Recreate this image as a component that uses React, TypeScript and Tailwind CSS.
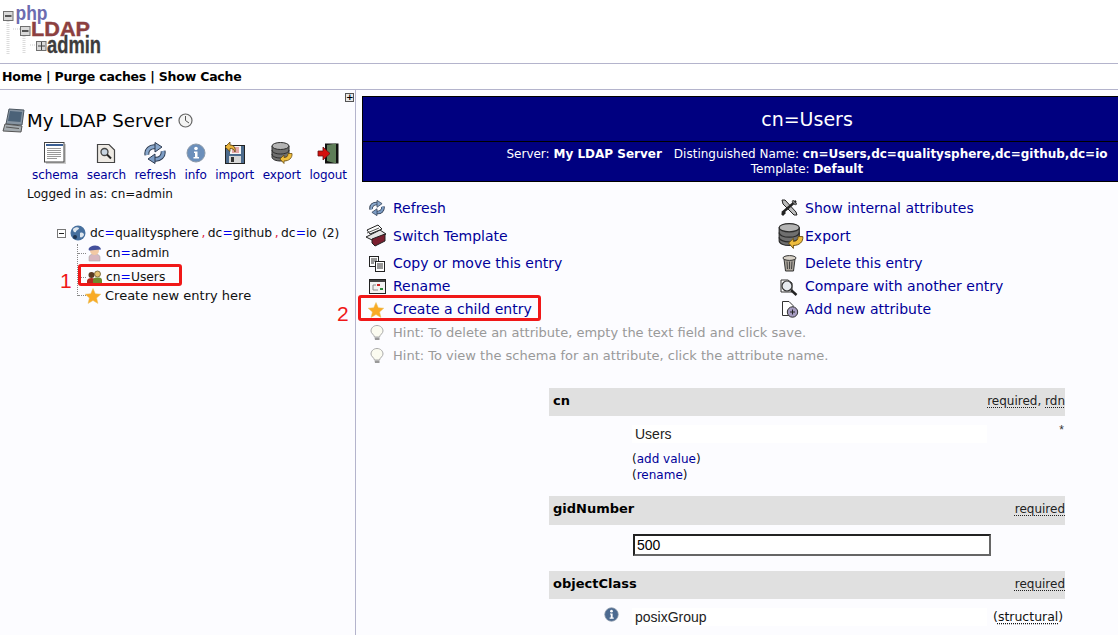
import React, { ReactNode } from 'react';

type IconProps = { size?: number; className?: string };

const Logo = () => (
  <svg width="106" height="60" viewBox="0 0 106 60" className="block">
    <g stroke="#dcdcdc" strokeDasharray="1 1" fill="none" strokeWidth="3">
      <path d="M8 20V53M24 35V53" />
    </g>
    <path d="M13 28H20M30 44H36" stroke="#ccc" strokeDasharray="1 1" />
    <g fill="#dadada" stroke="#707070">
      <rect x="3.5" y="10.5" width="9.5" height="9" />
      <rect x="20.5" y="25.5" width="9.5" height="9" />
      <rect x="36.5" y="40.5" width="9.5" height="9" />
    </g>
    <path d="M5 15H11.5M22 30H28.5" stroke="#555" strokeWidth="2" />
    <path d="M38 45H45M41.5 41V49" stroke="#444" />
    <g fontFamily="'Liberation Sans',sans-serif" fontWeight="700">
      <text x="15.5" y="19" fontSize="21" fill="#6c6cb0" textLength="32" lengthAdjust="spacingAndGlyphs">php</text>
      <text x="31" y="35" fontSize="21" fill="#8c4040" stroke="#8c4040" strokeWidth="0.4" textLength="59" lengthAdjust="spacingAndGlyphs">LDAP</text>
      <text x="47" y="52" fontSize="23" fill="#3c3c3c" stroke="#3c3c3c" strokeWidth="0.3" textLength="54" lengthAdjust="spacingAndGlyphs">admin</text>
    </g>
  </svg>
);

const ServerIcon = () => (
  <svg width="23" height="25" viewBox="0 0 23 25" className="shrink-0">
    <path d="M7 1L22 2L20 17L4 16Z" fill="#8795a3" stroke="#4c5660" />
    <path d="M8 3L20 4L18.5 14L6 13Z" fill="#4b6278" />
    <path d="M3 16L20 18L19 24L1 23Z" fill="#a4abb0" stroke="#555" />
    <path d="M4 19L17 20.5" stroke="#555" />
  </svg>
);

const ClockIcon = () => (
  <svg width="15" height="15" viewBox="0 0 15 15" className="shrink-0">
    <circle cx="7.5" cy="7.5" r="6.5" fill="#f4f4f4" stroke="#666" strokeWidth="1.2" />
    <path d="M7.5 3V7.5L11 10" stroke="#555" fill="none" />
  </svg>
);

const SchemaIcon = () => (
  <svg width="22" height="22" viewBox="0 0 22 22">
    <rect x="2" y="2" width="20" height="20" fill="#ccc" />
    <rect x="0.5" y="0.5" width="19.5" height="19.5" fill="#fff" stroke="#444" />
    <rect x="2" y="2" width="17" height="2" fill="#3b5f94" />
    <path d="M3 6.5H17M3 8.5H17M3 10.5H17M3 12.5H17M3 14.5H17M3 16.5H13" stroke="#999" />
  </svg>
);

const SearchIcon = () => (
  <svg width="20" height="21" viewBox="0 0 20 21">
    <path d="M1.5 1.5H13L18.5 7V19.5H1.5Z" fill="#eeeae4" stroke="#444" strokeWidth="1.2" />
    <circle cx="8.5" cy="9" r="3.5" fill="#c8d4e0" stroke="#444" strokeWidth="1.3" />
    <path d="M11 11.5L15 15.5" stroke="#222" strokeWidth="2" />
  </svg>
);

const RefreshIcon = ({ size = 22 }: IconProps) => (
  <svg width={size} height={size} viewBox="0 0 22 22" className="shrink-0">
    <path d="M3 13C2 8 6 4 12 5" fill="none" stroke="#2d3b50" strokeWidth="5" />
    <path d="M3 13C2 8 6 4 12 5" fill="none" stroke="#8aa8cc" strokeWidth="3" />
    <path d="M11 0.5L18 5L11 10Z" fill="#8aa8cc" stroke="#2d3b50" />
    <path d="M19 9C20 14 16 18 10 17" fill="none" stroke="#2d3b50" strokeWidth="5" />
    <path d="M19 9C20 14 16 18 10 17" fill="none" stroke="#7c9cc4" strokeWidth="3" />
    <path d="M11 12L4 17L11 21.5Z" fill="#7c9cc4" stroke="#2d3b50" />
  </svg>
);

const InfoIcon = ({ size = 20, fill = '#6b8fbb' }: IconProps & { fill?: string }) => (
  <svg width={size} height={size} viewBox="0 0 20 20">
    <circle cx="10" cy="10" r="9" fill={fill} stroke="#8c9aaa" />
    <circle cx="10" cy="5.5" r="1.8" fill="#fff" />
    <path d="M8 8.5H11.5V14H13V15.5H7.5V14H9V10H8Z" fill="#fff" />
  </svg>
);

const ImportIcon = () => (
  <svg width="22" height="22" viewBox="0 0 22 22">
    <rect x="1.5" y="3.5" width="19" height="18" fill="#4c6a8c" stroke="#222" />
    <rect x="6" y="4" width="11" height="8" fill="#f4f4f4" />
    <path d="M8 6H15M8 8H15M8 10H15" stroke="#c33" strokeWidth="0.8" />
    <rect x="5" y="14" width="12" height="7" fill="#d8d8d8" />
    <rect x="7" y="15" width="3" height="5" fill="#333" />
    <path d="M1 5L6 0V3C10 3 12 6 11 10C10 7 8.5 6.5 6 6.5V9.5Z" fill="#e8b33c" stroke="#5e4410" strokeWidth="0.8" />
  </svg>
);

const DbIcon = ({ size = 22 }: IconProps) => (
  <svg width={size} height={size} viewBox="0 0 22 22" className="shrink-0">
    <path d="M1 4V15C1 17.5 5 19 9.5 19S18 17.5 18 15V4Z" fill="#6f6f6f" stroke="#2c2c2c" />
    <ellipse cx="9.5" cy="4" rx="8.5" ry="3.5" fill="#b4b4b4" stroke="#2c2c2c" />
    <path d="M1 8C1 10.5 5 12 9.5 12S18 10.5 18 8M1 12C1 14.5 5 16 9.5 16S18 14.5 18 12" fill="none" stroke="#2c2c2c" />
    <path d="M9 17L13 13V15.5C16 15.5 17 14 17 11.5H21C21.5 16 18 19 13 19V21.5Z" fill="#eebc3d" stroke="#6b4e10" strokeWidth="0.8" />
  </svg>
);

const LogoutIcon = () => (
  <svg width="22" height="21" viewBox="0 0 22 21">
    <rect x="8" y="0.5" width="13.5" height="20" fill="#111" />
    <path d="M10 2L19 0.5V20.5L10 18Z" fill="#5e7d58" />
    <path d="M1 8H6V4L13 10.5L6 17V13H1Z" fill="#d4100c" stroke="#611" strokeWidth="0.8" />
  </svg>
);

const GlobeIcon = () => (
  <svg width="16" height="16" viewBox="0 0 16 16" className="shrink-0">
    <circle cx="8" cy="8" r="7.5" fill="#47709e" />
    <path d="M3 4C5 2 8 2 9 3C9 5 6 5 6 7C4 8 3 6 3 4ZM10 8C12 7 14 8 14 10C13 12 11 13 10 12Z" fill="#dfe7ee" />
    <circle cx="5" cy="12" r="2" fill="#1e3552" />
  </svg>
);

const UserIcon = () => (
  <svg width="15" height="18" viewBox="0 0 15 18" className="shrink-0">
    <path d="M2 17V13C2 11 5 10 7.5 10S13 11 13 13V17Z" fill="#d8b8c0" stroke="#aaa" strokeWidth="0.6" />
    <circle cx="7.5" cy="6.5" r="4.5" fill="#f2c9a4" />
    <path d="M1.5 5C3 1 11 0 13.5 4L14 5.5L2 6.5Z" fill="#44509c" />
  </svg>
);

const GroupIcon = () => (
  <svg width="15" height="15" viewBox="0 0 15 15" className="shrink-0">
    <circle cx="4.5" cy="5" r="3" fill="#5a3a22" />
    <circle cx="10.5" cy="4" r="3" fill="#e6c070" stroke="#5a4a20" strokeWidth="0.7" />
    <path d="M0 15V11C0 9 2 8 4.5 8S8 9 8 11V15Z" fill="#b02a20" />
    <path d="M6 15V10C6 8 8 7.5 10.5 7.5S15 8 15 10V15Z" fill="#6f8a2c" />
  </svg>
);

const StarIcon = ({ size = 16 }: IconProps) => (
  <svg width={size} height={size} viewBox="0 0 16 16" className="shrink-0">
    <path d="M8 0.5L10.3 5.7L15.8 6.2L11.6 9.9L12.9 15.4L8 12.5L3.1 15.4L4.4 9.9L0.2 6.2L5.7 5.7Z" fill="#f9ab26" stroke="#e8c060" strokeWidth="0.5" />
  </svg>
);

const SwitchIcon = () => (
  <svg width="24" height="24" viewBox="0 0 24 24">
    <path d="M2 13L16 6L22 10L10 17Z" fill="#e6e6e6" stroke="#222" />
    <path d="M3 6L14 1L18 5L6 10Z" fill="#fff" stroke="#222" />
    <path d="M8 15L21 10V17L11 22L8 19Z" fill="#7a2030" stroke="#222" />
    <path d="M3 9L15 4" stroke="#555" />
  </svg>
);

const CopyIcon = () => (
  <svg width="16" height="16" viewBox="0 0 16 16" className="shrink-0">
    <rect x="0.5" y="0.5" width="9" height="10" fill="#fff" stroke="#222" />
    <path d="M2 3H8M2 5H8M2 7H5" stroke="#333" />
    <rect x="6.5" y="5.5" width="9" height="10" fill="#fff" stroke="#222" />
    <path d="M8 8H14M8 10H14M8 12H14" stroke="#333" />
  </svg>
);

const RenameIcon = () => (
  <svg width="17" height="15" viewBox="0 0 17 15" className="shrink-0">
    <rect x="0.5" y="0.5" width="16" height="14" fill="#f3f3f3" stroke="#222" />
    <rect x="1" y="1" width="15" height="2" fill="#444" />
    <rect x="8" y="5" width="3" height="2" fill="#c22" />
    <rect x="11" y="9" width="3" height="2" fill="#2a8a3a" />
    <path d="M4 6H7M4 6V11H9" stroke="#888" fill="none" />
  </svg>
);

const HintIcon = () => (
  <svg width="14" height="16" viewBox="0 0 14 16" className="shrink-0">
    <path d="M7 0.5C3.5 0.5 1 3 1 6C1 8.5 4 9.5 4.5 12H9.5C10 9.5 13 8.5 13 6C13 3 10.5 0.5 7 0.5Z" fill="#fbfbf0" stroke="#aaa" />
    <path d="M4.5 12.5H9.5V15H5Z" fill="#999" />
  </svg>
);

const ToolsIcon = () => (
  <svg width="18" height="18" viewBox="0 0 18 18" className="shrink-0">
    <path d="M2 1L5 1L16 13L17 16L14 16L3 5Z" fill="#bbb" stroke="#222" />
    <path d="M16 2L2 14" stroke="#222" strokeWidth="2.4" />
    <path d="M1 15L4 12L6 14L3 17Z" fill="#222" />
    <path d="M13 1L17 5L15 6L12 3Z" fill="#777" stroke="#222" strokeWidth="0.6" />
  </svg>
);

const TrashIcon = () => (
  <svg width="15" height="17" viewBox="0 0 15 17" className="shrink-0">
    <path d="M2 4L3.5 16H11.5L13 4Z" fill="#aaa39a" stroke="#333" />
    <ellipse cx="7.5" cy="3" rx="6.5" ry="2.4" fill="#d8d2c8" stroke="#333" />
    <path d="M5 6.5L5.5 14M7.5 6.5V14M10 6.5L9.5 14" stroke="#444" />
  </svg>
);

const CompareIcon = () => (
  <svg width="18" height="18" viewBox="0 0 18 18" className="shrink-0">
    <path d="M1 14V2H8L12 5V14Z" fill="#fff" stroke="#333" />
    <circle cx="7" cy="8" r="5" fill="#e6eaef" stroke="#333" strokeWidth="1.2" />
    <path d="M11 12L16.5 17" stroke="#222" strokeWidth="2.4" />
  </svg>
);

const AddAttrIcon = () => (
  <svg width="18" height="17" viewBox="0 0 18 17" className="shrink-0">
    <path d="M1.5 14.5V0.5H8L12 4.5V14.5Z" fill="#fff" stroke="#333" />
    <circle cx="11.5" cy="11" r="5.2" fill="#a59bc0" stroke="#333" />
    <path d="M9 11H14M11.5 8.5V13.5" stroke="#222" />
  </svg>
);

const TreeMinus = () => (
  <svg width="9" height="9" viewBox="0 0 9 9" className="shrink-0">
    <rect x="0.5" y="0.5" width="8" height="8" fill="#fff" stroke="#777" />
    <path d="M2 4.5H7" stroke="#222" />
  </svg>
);

const TreeRow = ({ icon, children, className }: { icon: ReactNode; children: ReactNode; className: string }) => (
  <div className={`flex items-center ${className}`}>
    <span className="w-[8px] mr-[1px] border-t border-dotted border-[#888]" />
    {icon}
    {children}
  </div>
);

const Action = ({ icon, label, height = 'h-[23px]', iconBox = 'w-[31px] pl-[7px]' }: { icon: ReactNode; label: string; height?: string; iconBox?: string }) => (
  <div className={`flex items-center ${height}`}>
    <span className={`flex shrink-0 ${iconBox}`}>{icon}</span>
    <a className="text-[#000099]">{label}</a>
  </div>
);

const Hint = ({ text }: { text: string }) => (
  <div className="flex items-center h-[23px] col-span-2 text-[13px] text-[#999999]">
    <span className="flex shrink-0 w-[31px] pl-[8px]"><HintIcon /></span>
    {text}
  </div>
);

const AttrHeader = ({ name, flags, height }: { name: string; flags: ReactNode; height: string }) => (
  <div className={`flex items-center justify-between bg-[#e0e0e0] pl-[4px] ${height}`}>
    <b className="text-[13px] text-black">{name}</b>
    <span className="text-[12px] text-[#222]">{flags}</span>
  </div>
);

const Flag = ({ children }: { children: string }) => (
  <span className="underline decoration-dotted underline-offset-2">{children}</span>
);

const Dn = ({ parts }: { parts: string[][] }) => (
  <span className="whitespace-pre">
    {parts.map(([k, v], i) => (
      <span key={k + v}>
        {i > 0 && <span className="text-[#e02040] mx-[2.5px]">,</span>}
        {k}<span className="text-[#0000ee]">=</span>{v}
      </span>
    ))}
  </span>
);

export default function App() {
  return (
    <div className="relative w-[1118px] h-[635px] overflow-hidden flex flex-col bg-white text-[13px] text-[#111] font-['DejaVu_Sans',sans-serif]">
      {/* Top logo + nav */}
      <div className="h-[63px] shrink-0 pt-[1px]"><Logo /></div>
      <div className="h-[27px] shrink-0 flex items-center pl-[2px] pt-[1px] border-y border-[#b4b4cc] font-bold text-[12.5px] tracking-[-0.2px] text-black">
        Home | Purge caches | Show Cache
      </div>

      <div className="flex-1 flex min-h-0 bg-[#fcfcff]">
        {/* Tree panel */}
        <div className="relative w-[356px] shrink-0 border-r border-[#b4b4cc] flex flex-col">
          <span className="absolute left-[345px] top-[3px] w-[9px] h-[9px] border border-[#555] bg-[#e8e8e8] text-[9px] leading-[7px] text-center font-bold text-black">+</span>
          <div className="flex items-center pl-[2px] mt-[18px] h-[25px]">
            <ServerIcon />
            <span className="ml-[2px] text-[18.2px] text-black">My LDAP Server</span>
            <span className="ml-[6px]"><ClockIcon /></span>
          </div>
          <div className="flex pl-[32px] gap-[8.5px] mt-[8px] text-[12px] tracking-[-0.1px] text-[#000099]">
            {[
              ['schema', <SchemaIcon />],
              ['search', <SearchIcon />],
              ['refresh', <RefreshIcon />],
              ['info', <InfoIcon />],
              ['import', <ImportIcon />],
              ['export', <DbIcon />],
              ['logout', <LogoutIcon />],
            ].map(([label, icon]) => (
              <div key={label as string} className="flex flex-col items-center">
                <span className="h-[24px] flex items-center">{icon}</span>
                <a className="mt-[2px] leading-[16px]">{label}</a>
              </div>
            ))}
          </div>
          <div className="pl-[27px] mt-[3px] leading-[16px] text-[12px]">Logged in as: cn=admin</div>

          <div className="pl-[57px] mt-[21px]">
            <div className="flex items-center h-[20px] text-[12.3px]">
              <TreeMinus />
              <span className="ml-[4px] mr-[4px]"><GlobeIcon /></span>
              <Dn parts={[['dc', 'qualitysphere'], ['dc', 'github'], ['dc', 'io']]} />
              <span className="ml-[5px]">(2)</span>
            </div>
            <div className="ml-[20px] border-l border-dotted border-[#888] h-[52px] mt-[1px] flex flex-col">
              <TreeRow className="h-[18px] shrink-0" icon={<UserIcon />}>
                <span className="ml-[4px] text-[12.3px]">cn<span className="text-[#0000ee]">=</span>admin</span>
              </TreeRow>
              <TreeRow className="h-[30px] shrink-0" icon={<GroupIcon />}>
                <span className="ml-[4px] text-[12.3px]">cn<span className="text-[#0000ee]">=</span>Users</span>
              </TreeRow>
              <TreeRow className="h-[7px] shrink-0" icon={<span className="-ml-[2px]"><StarIcon /></span>}>
                <span className="ml-[4px] whitespace-nowrap">Create new entry here</span>
              </TreeRow>
            </div>
          </div>
        </div>

        {/* Entry panel */}
        <div className="flex-1 min-w-0 overflow-hidden flex flex-col pl-[6px] pt-[6px]">
          <div className="w-[890px] h-[86px] shrink-0 bg-[#000080] border border-black text-white text-center flex flex-col">
            <div className="h-[45px] pt-[1px] border-b border-black flex items-center justify-center text-[19px] shrink-0">cn=Users</div>
            <div className="leading-[15px] pt-[5px] text-[12px]">
              <div>
                Server: <b>My LDAP Server</b><span className="ml-[12px]">Distinguished Name: <b>cn=Users,dc=qualitysphere,dc=github,dc=io</b></span>
              </div>
              <div>Template: <b>Default</b></div>
            </div>
          </div>

          <div className="grid grid-cols-[417px_1fr] mt-[12px] text-[14px]">
            <Action height="h-[28px]" icon={<RefreshIcon size={16} />} label="Refresh" />
            <Action height="h-[28px]" iconBox="w-[26px] pl-[1px]" icon={<ToolsIcon />} label="Show internal attributes" />
            <Action height="h-[30px] pb-[2px]" iconBox="w-[31px] pl-[2px]" icon={<SwitchIcon />} label="Switch Template" />
            <Action height="h-[30px] pb-[2px]" iconBox="w-[26px] -ml-[1px] mr-[1px]" icon={<DbIcon size={26} />} label="Export" />
            <Action icon={<CopyIcon />} label="Copy or move this entry" />
            <Action iconBox="w-[26px] pl-[3px]" icon={<TrashIcon />} label="Delete this entry" />
            <Action icon={<RenameIcon />} label="Rename" />
            <Action iconBox="w-[26px] pl-[1px]" icon={<CompareIcon />} label="Compare with another entry" />
            <Action iconBox="w-[31px] pl-[6px]" icon={<StarIcon />} label="Create a child entry" />
            <Action iconBox="w-[26px] pl-[2px]" icon={<AddAttrIcon />} label="Add new attribute" />
            <Hint text="Hint: To delete an attribute, empty the text field and click save." />
            <Hint text="Hint: To view the schema for an attribute, click the attribute name." />
          </div>

          {/* Attributes */}
          <div className="ml-[187px] w-[516px] mt-[21px]">
            <AttrHeader height="h-[28px] pb-[2px]" name="cn" flags={<><Flag>required</Flag>, <Flag>rdn</Flag></>} />
            <div className="relative h-[80px] pt-[9px] pl-[83px] font-['Liberation_Sans',sans-serif] text-[14px]">
              <div className="w-[355px] h-[18px] bg-white pl-[3px] leading-[18px] text-[#222]">Users</div>
              <span className="absolute right-[1px] top-[5px] text-[12px] text-[#333]">*</span>
              <div className="mt-[8px] leading-[16px] font-['DejaVu_Sans',sans-serif] text-[12px]">
                (<a className="text-[#000099]">add value</a>)<br />(<a className="text-[#000099]">rename</a>)
              </div>
            </div>
            <AttrHeader height="h-[29px] pb-[3px]" name="gidNumber" flags={<Flag>required</Flag>} />
            <div className="h-[46px] pt-[9px] pl-[84px]">
              <div className="w-[358px] h-[22px] border-2 border-t-[#222] border-l-[#222] border-r-[#666] border-b-[#666] bg-white pl-[2px] font-['Liberation_Sans',sans-serif] text-[14px] leading-[18px] text-black">500</div>
            </div>
            <AttrHeader height="h-[28px] pb-[2px]" name="objectClass" flags={<Flag>required</Flag>} />
            <div className="flex items-start h-[36px] pt-[9px]">
              <span className="ml-[55px] -mt-[1px] w-[16px]"><InfoIcon size={15} fill="#4c6a90" /></span>
              <div className="ml-[12px] w-[355px] h-[18px] bg-white pl-[3px] font-['Liberation_Sans',sans-serif] text-[14px] leading-[18px] text-[#222]">posixGroup</div>
              <span className="ml-[6px] text-[12.5px]">(<Flag>structural</Flag>)</span>
            </div>
          </div>
        </div>
      </div>

      {/* Red annotations */}
      <div className="absolute left-[78px] top-[264px] w-[104px] h-[22px] border-[3px] border-[#f01818] rounded-[3px]" />
      <div className="absolute left-[358px] top-[295px] w-[183px] h-[26px] border-[3px] border-[#f01818] rounded-[3px]" />
      <span className="absolute left-[60px] top-[269px] text-[21px] leading-[24px] text-[#f01818] font-['Liberation_Sans',sans-serif]">1</span>
      <span className="absolute left-[337px] top-[302px] text-[21px] leading-[24px] text-[#f01818] font-['Liberation_Sans',sans-serif]">2</span>
    </div>
  );
}
